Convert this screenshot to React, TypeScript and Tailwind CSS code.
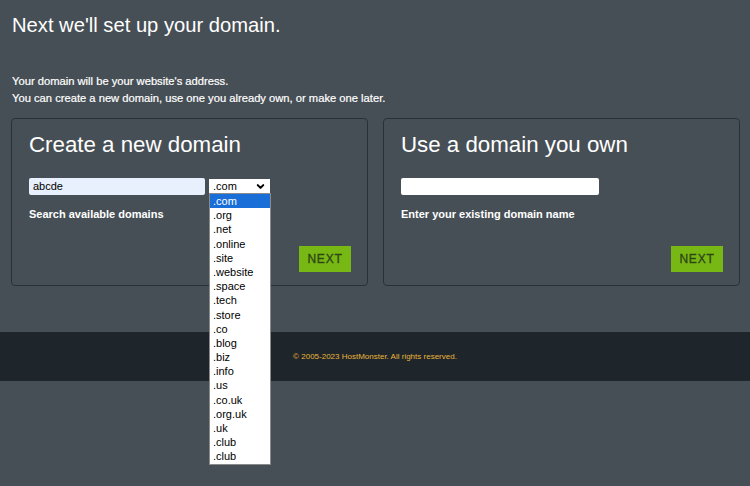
import { ChevronDown } from "lucide-react";

const tlds = [
  ".com",
  ".org",
  ".net",
  ".online",
  ".site",
  ".website",
  ".space",
  ".tech",
  ".store",
  ".co",
  ".blog",
  ".biz",
  ".info",
  ".us",
  ".co.uk",
  ".org.uk",
  ".uk",
  ".club",
  ".club",
];

function NextButton() {
  return (
    <button className="w-[52px] h-[26px] bg-[#78b814] text-[#2d4614] text-[12px] tracking-[0.8px] [-webkit-text-stroke:0.3px_#2d4614] flex items-center justify-center">
      NEXT
    </button>
  );
}

/* Open select with its popup list drawn on top of the page */
function TldSelect() {
  return (
    <div className="relative">
      <div className="w-[61px] h-[14px] bg-white text-black text-[11px] leading-[14px] pl-[4px] flex items-center justify-between pr-[4px]">
        <span>.com</span>
        <ChevronDown className="w-[11px] h-[11px]" strokeWidth={4.5} />
      </div>
      <ul className="absolute left-0 top-[14px] w-[62px] bg-white border border-[#8a8a8a] z-10 text-[11px] text-black">
        {tlds.map((t, i) => (
          <li
            key={i}
            className={
              "h-[14.2px] leading-[14px] pl-[3px] " +
              (i === 0 ? "bg-[#1a6ed8] text-white" : "")
            }
          >
            {t}
          </li>
        ))}
      </ul>
    </div>
  );
}

function Card({
  title,
  children,
  label,
}: {
  title: string;
  children: React.ReactNode;
  label: string;
}) {
  return (
    <div className="flex-1 h-[168px] border border-[#2a3136] rounded-[4px] pl-[17px] pr-[16px] pt-[13px] pb-[13px] flex flex-col">
      <h2 className="text-[22.3px] leading-[26px] text-white">{title}</h2>
      <div className="mt-[20px] flex items-start gap-[4px]">{children}</div>
      <p className="mt-[12px] text-[11px] font-bold leading-[14px] text-white">{label}</p>
      <div className="mt-auto flex justify-end">
        <NextButton />
      </div>
    </div>
  );
}

export default function App() {
  return (
    <div className="min-h-[486px] bg-[#474f56] text-white font-['Liberation_Sans',Arial,sans-serif]">
      <h1 className="px-[12px] pt-[13px] text-[20.2px] leading-[24px]">Next we'll set up your domain.</h1>
      <div className="px-[12px] mt-[36px] text-[11.2px] leading-[17px] [-webkit-text-stroke:0.2px_white]">
        <p>Your domain will be your website's address.</p>
        <p>You can create a new domain, use one you already own, or make one later.</p>
      </div>
      <div className="mt-[11px] pl-[11px] pr-[10px] flex gap-[15px]">
        <Card title="Create a new domain" label="Search available domains">
          <div className="w-[176px] h-[17px] bg-[#e8f0fe] rounded-[2px] text-black text-[11px] leading-[17px] pl-[4px]">
            abcde
          </div>
          <div className="pt-[1px]">
            <TldSelect />
          </div>
        </Card>
        <Card title="Use a domain you own" label="Enter your existing domain name">
          <div className="w-[198px] h-[17px] bg-white rounded-[2px]" />
        </Card>
      </div>
      <footer className="mt-[46px] h-[49px] bg-[#1f262b] flex items-center justify-center">
        <p className="text-[8px] text-[#e8b43a]">© 2005-2023 HostMonster. All rights reserved.</p>
      </footer>
    </div>
  );
}
